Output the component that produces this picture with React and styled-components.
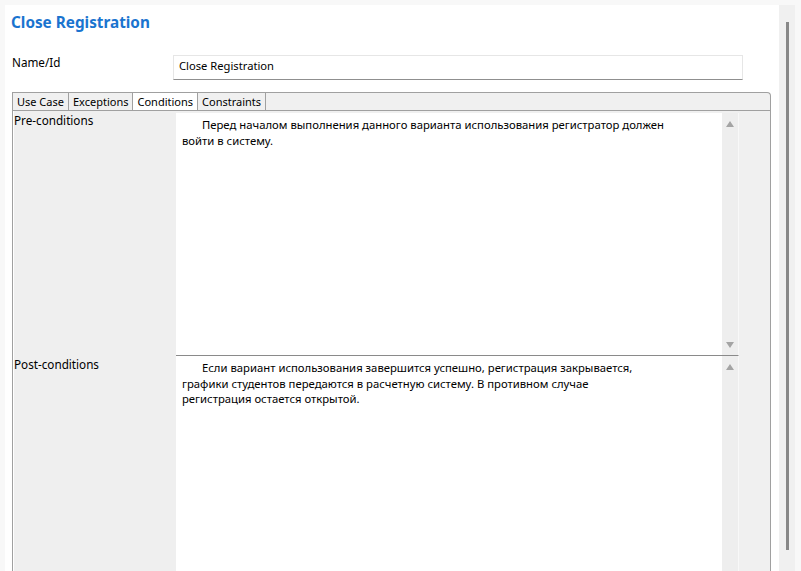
import React from "react";
import styled, { createGlobalStyle } from "styled-components";

const GlobalStyle = createGlobalStyle`
  html, body {
    margin: 0;
    background: #f8f8f8;
  }
  body {
    font-family: "Noto Sans", "Open Sans", sans-serif;
    font-size: 11.5px;
    color: #000;
  }
`;

const Window = styled.div`
  display: flex;
  height: 571px;
  padding: 5px 6px 0 5px;
  box-sizing: border-box;
  overflow: hidden;
`;

const Panel = styled.div`
  width: 774px;
  flex-shrink: 0;
  background: #fff;
  padding: 7px 8px 0 6px;
  box-sizing: border-box;
  display: flex;
  flex-direction: column;
  overflow: hidden;
`;

const Title = styled.h1`
  margin: 0 0 23px;
  font-size: 15.3px;
  line-height: 20px;
  font-weight: 700;
  color: #1a74cf;
`;

const FieldRow = styled.div`
  display: flex;
  align-items: flex-start;
  margin-right: 28px;
`;

const FieldLabel = styled.label`
  width: 162px;
  flex-shrink: 0;
  padding-left: 1px;
  font-size: 11.7px;
  line-height: 14px;
  box-sizing: border-box;
`;

const TextInput = styled.div`
  flex: 1;
  height: 25px;
  box-sizing: border-box;
  border: 1px solid #e6e6e6;
  border-bottom-color: #8f8f8f;
  padding: 2px 5px 0;
  font-size: 11.2px;
  line-height: 16px;
`;

const Folder = styled.div`
  margin: 12px 0 0 1px;
  border: 1px solid #a0a0a0;
  border-radius: 0 4px 0 0;
  border-bottom: none;
  flex: 1;
  display: flex;
  flex-direction: column;
  background: #f0f0f0;
`;

const TabBar = styled.div`
  display: flex;
  height: 17px;
  border-bottom: 1px solid #a0a0a0;
`;

const Tab = styled.div`
  padding: 0 4px;
  font-size: 11px;
  line-height: 17px;
  border-right: 1px solid #a0a0a0;
  background: ${(p) => (p.active ? "#fff" : "#f0f0f0")};
  white-space: nowrap;
`;

const Body = styled.div`
  flex: 1;
  display: flex;
  flex-direction: column;
  border-left: 1px solid #fff;
`;

const Row = styled.div`
  display: flex;
  height: ${(p) => p.h}px;
  flex-shrink: 0;
`;

const RowLabel = styled.div`
  width: 162px;
  flex-shrink: 0;
  padding: 2px 0 0 0;
  font-size: 11.7px;
  line-height: 14px;
  box-sizing: border-box;
  background: #efefef;
`;

const Editor = styled.div`
  flex: 1;
  display: flex;
  margin: ${(p) => (p.first ? "2px" : "0")} 31px 0 0;
  border-top: ${(p) => (p.first ? "none" : "1px solid #8a8a8a")};
  border-right: 1px solid #f8f8f8;
  background: #fff;
`;

const EditorText = styled.div`
  flex: 1;
  padding: 4px 6px 0;
  font-size: 11.3px;
  line-height: 15.5px;
  white-space: nowrap;
`;

const Line = styled.div`
  text-indent: ${(p) => (p.indent ? "20px" : "0")};
`;

const ScrollTrack = styled.div`
  width: 16px;
  background: #eeeeee;
  display: flex;
  flex-direction: column;
  justify-content: space-between;
  align-items: center;
  padding: 8px 0 7px;
  box-sizing: border-box;
`;

const Arrow = styled.div`
  width: 0;
  height: 0;
  border-left: 4.5px solid transparent;
  border-right: 4.5px solid transparent;
  ${(p) =>
    p.down
      ? "border-top: 6px solid #a4a4a4;"
      : "border-bottom: 6px solid #a4a4a4;"}
`;

const PageScroll = styled.div`
  width: 16px;
  flex-shrink: 0;
  background: #f0f0f0;
  padding: 17px 0 0 7px;
  box-sizing: border-box;
`;

const Thumb = styled.div`
  width: 3px;
  height: 528px;
  background: #888;
`;

const pre = [
  "Перед началом выполнения данного варианта использования регистратор должен",
  "войти в систему.",
];

const post = [
  "Если вариант использования завершится успешно, регистрация закрывается,",
  "графики студентов передаются в расчетную систему. В противном случае",
  "регистрация остается открытой.",
];

function ConditionRow({ label, lines, first, h, showDown }) {
  return (
    <Row h={h}>
      <RowLabel>{label}</RowLabel>
      <Editor first={first}>
        <EditorText>
          {lines.map((l, i) => (
            <Line key={i} indent={i === 0}>
              {l}
            </Line>
          ))}
        </EditorText>
        <ScrollTrack>
          <Arrow />
          {showDown && <Arrow down />}
        </ScrollTrack>
      </Editor>
    </Row>
  );
}

export default function App() {
  const tabs = ["Use Case", "Exceptions", "Conditions", "Constraints"];
  return (
    <>
      <GlobalStyle />
      <Window>
        <Panel>
          <Title>Close Registration</Title>
          <FieldRow>
            <FieldLabel>Name/Id</FieldLabel>
            <TextInput>Close Registration</TextInput>
          </FieldRow>
          <Folder>
            <TabBar>
              {tabs.map((t) => (
                <Tab key={t} active={t === "Conditions"}>
                  {t}
                </Tab>
              ))}
            </TabBar>
            <Body>
              <ConditionRow
                label="Pre-conditions"
                lines={pre}
                first
                h={244}
                showDown
              />
              <ConditionRow label="Post-conditions" lines={post} h={260} />
            </Body>
          </Folder>
        </Panel>
        <PageScroll>
          <Thumb />
        </PageScroll>
      </Window>
    </>
  );
}
